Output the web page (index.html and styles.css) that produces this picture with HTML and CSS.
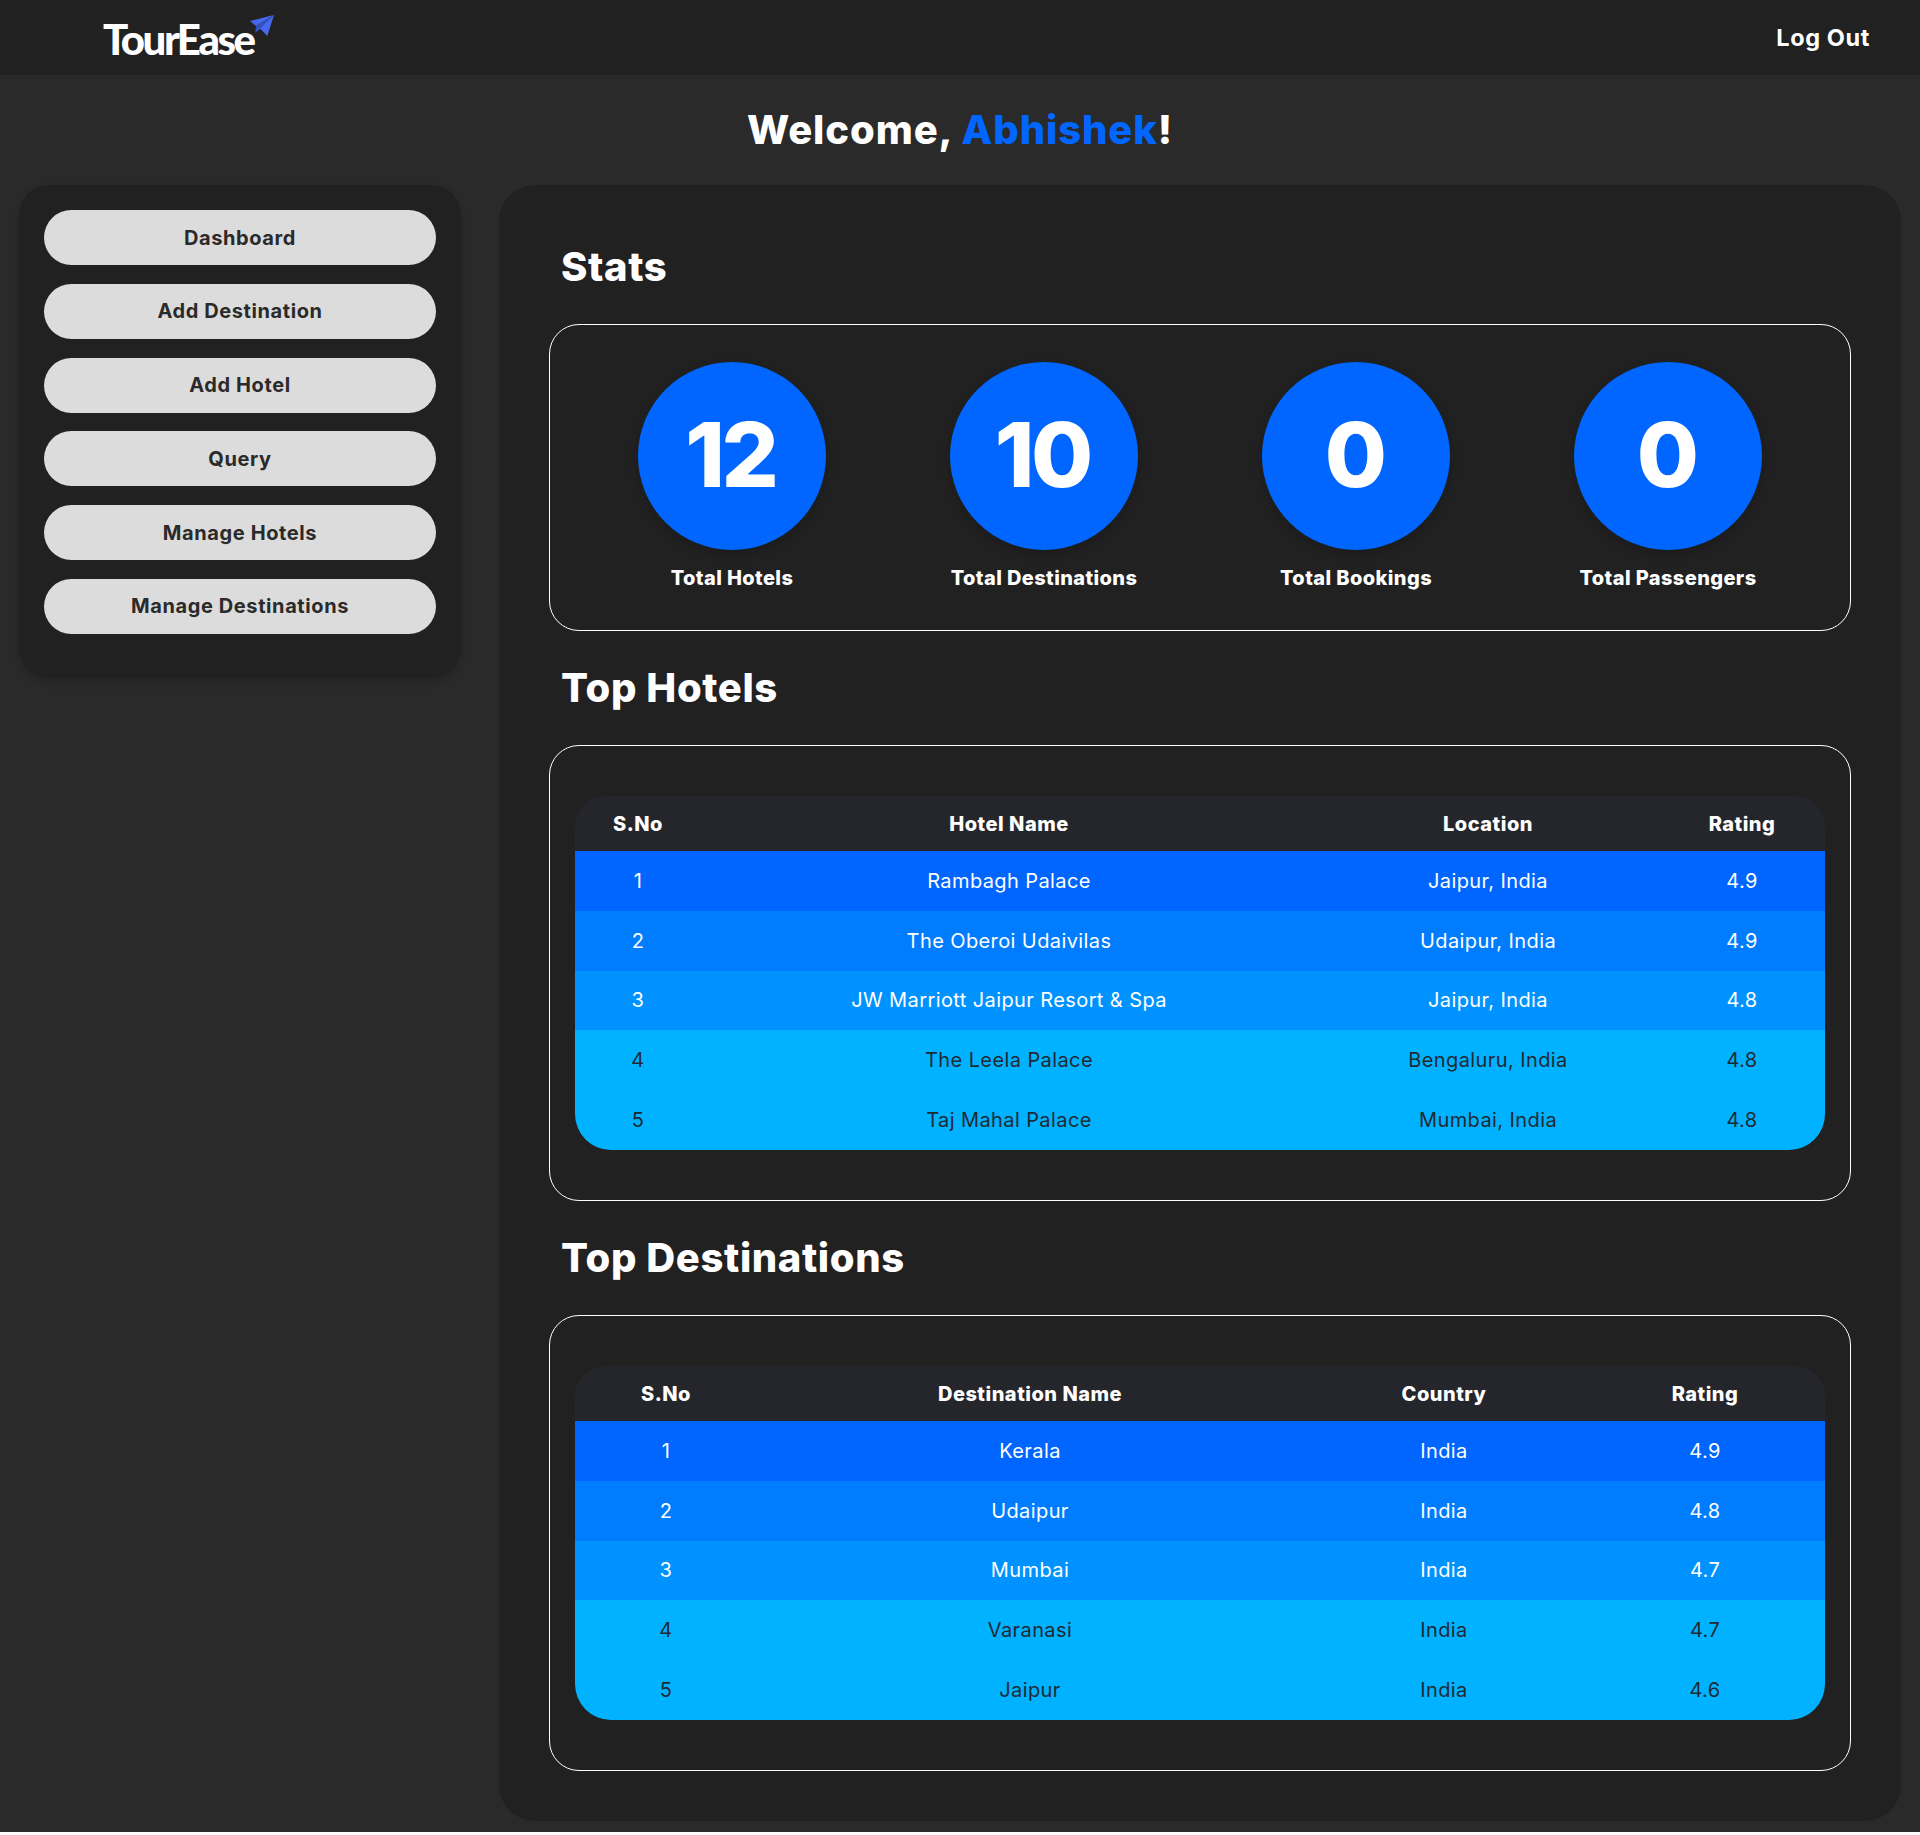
FILE: index.html
```html
<html>

<head>
	<title>TourEase Dashboard</title>
	<link rel="stylesheet" href="styles.css">
</head>

<body>
	<div class="page">
		<header class="topbar">
			<div class="logo">
				<span class="logoText">TourEase</span>
				<svg class="logoPlane" viewBox="0 0 24 22" width="24" height="22">
					<path d="M24 0 L0 6 L6 11 Z" fill="#4668ee" />
					<path d="M24 0 L6 11 L5.3 17.5 L10.7 14 Z" fill="#3450c0" />
					<path d="M24 0 L10 13.5 L17.3 21 Z" fill="#4668ee" />
				</svg>
			</div>
			<a class="logout">Log Out</a>
		</header>

		<h1 class="welcome">Welcome, <span class="welcomeName">Abhishek</span>!</h1>

		<div class="layout">
			<nav class="sidebar">
				<button class="navButton">Dashboard</button>
				<button class="navButton">Add Destination</button>
				<button class="navButton">Add Hotel</button>
				<button class="navButton">Query</button>
				<button class="navButton">Manage Hotels</button>
				<button class="navButton">Manage Destinations</button>
			</nav>

			<main class="content">
				<h2 class="sectionTitle">Stats</h2>
				<section class="box stats">
					<div class="stat">
						<div class="statCircle">12</div>
						<div class="statLabel">Total Hotels</div>
					</div>
					<div class="stat">
						<div class="statCircle">10</div>
						<div class="statLabel">Total Destinations</div>
					</div>
					<div class="stat">
						<div class="statCircle">0</div>
						<div class="statLabel">Total Bookings</div>
					</div>
					<div class="stat">
						<div class="statCircle">0</div>
						<div class="statLabel">Total Passengers</div>
					</div>
				</section>

				<h2 class="sectionTitle">Top Hotels</h2>
				<section class="box tableBox">
					<table class="dataTable hotels">
						<colgroup>
							<col class="col1">
							<col class="col2">
							<col class="col3">
							<col class="col4">
						</colgroup>
						<thead>
							<tr>
								<th>S.No</th>
								<th>Hotel Name</th>
								<th>Location</th>
								<th>Rating</th>
							</tr>
						</thead>
						<tbody>
							<tr>
								<td>1</td>
								<td>Rambagh Palace</td>
								<td>Jaipur, India</td>
								<td>4.9</td>
							</tr>
							<tr>
								<td>2</td>
								<td>The Oberoi Udaivilas</td>
								<td>Udaipur, India</td>
								<td>4.9</td>
							</tr>
							<tr>
								<td>3</td>
								<td>JW Marriott Jaipur Resort &amp; Spa</td>
								<td>Jaipur, India</td>
								<td>4.8</td>
							</tr>
							<tr>
								<td>4</td>
								<td>The Leela Palace</td>
								<td>Bengaluru, India</td>
								<td>4.8</td>
							</tr>
							<tr>
								<td>5</td>
								<td>Taj Mahal Palace</td>
								<td>Mumbai, India</td>
								<td>4.8</td>
							</tr>
						</tbody>
					</table>
				</section>

				<h2 class="sectionTitle">Top Destinations</h2>
				<section class="box tableBox">
					<table class="dataTable destinations">
						<colgroup>
							<col class="col1">
							<col class="col2">
							<col class="col3">
							<col class="col4">
						</colgroup>
						<thead>
							<tr>
								<th>S.No</th>
								<th>Destination Name</th>
								<th>Country</th>
								<th>Rating</th>
							</tr>
						</thead>
						<tbody>
							<tr>
								<td>1</td>
								<td>Kerala</td>
								<td>India</td>
								<td>4.9</td>
							</tr>
							<tr>
								<td>2</td>
								<td>Udaipur</td>
								<td>India</td>
								<td>4.8</td>
							</tr>
							<tr>
								<td>3</td>
								<td>Mumbai</td>
								<td>India</td>
								<td>4.7</td>
							</tr>
							<tr>
								<td>4</td>
								<td>Varanasi</td>
								<td>India</td>
								<td>4.7</td>
							</tr>
							<tr>
								<td>5</td>
								<td>Jaipur</td>
								<td>India</td>
								<td>4.6</td>
							</tr>
						</tbody>
					</table>
				</section>
			</main>
		</div>
	</div>
</body>

</html>
```

FILE: styles.css
```css
* {
	box-sizing: border-box;
	margin: 0;
	padding: 0;
}

html {
	background: white;
}

body {
	font-family: Inter, "Open Sans", sans-serif;
	color: white;
}

.page {
	background: #2a2a2a;
	height: 1832px;
}

.topbar {
	height: 75px;
	background: #212121;
	display: flex;
	align-items: center;
	justify-content: space-between;
	padding: 0 50px 0 103px;
}

.logo {
	position: relative;
	height: 54px;
}

.logoText {
	font-family: Lato, sans-serif;
	font-size: 42px;
	font-weight: 900;
	letter-spacing: -2.5px;
	line-height: 48px;
	display: block;
	margin-top: 4px;
}

.logoPlane {
	position: absolute;
	left: 147px;
	top: 4px;
}

.logout {
	font-size: 23.5px;
	font-weight: 700;
	letter-spacing: 0.6px;
}

.welcome {
	height: 110px;
	font-size: 40px;
	font-weight: 800;
	line-height: 110px;
	text-align: center;
	letter-spacing: 0.9px;
}

.welcomeName {
	color: #0066ff;
}

.layout {
	display: flex;
	align-items: flex-start;
	gap: 38px;
	padding: 0 19px;
}

.sidebar {
	width: 442px;
	flex-shrink: 0;
	background: #212121;
	border-radius: 30px;
	padding: 25px 25px 44px;
	display: flex;
	flex-direction: column;
	gap: 18.8px;
	box-shadow: 0 4px 10px rgba(0, 0, 0, 0.15);
}

.navButton {
	height: 55px;
	background: #dcdcdc;
	border: none;
	border-radius: 28px;
	font-family: inherit;
	font-size: 20px;
	font-weight: 700;
	letter-spacing: 0.6px;
	color: #2a2a2a;
}

.content {
	flex: 1;
	background: #212121;
	border-radius: 36px;
	padding: 52px 50px 50px;
}

.sectionTitle {
	font-size: 40px;
	font-weight: 800;
	letter-spacing: 0.6px;
	line-height: 60px;
	height: 60px;
	margin: 27px 0 27px 12px;
}

.sectionTitle:first-child {
	margin-top: 0;
}

.box {
	border: 1px solid white;
	border-radius: 30px;
}

.stats {
	height: 307px;
	padding: 37px 26px 0;
	display: grid;
	grid-template-columns: repeat(4, 1fr);
}

.stat {
	display: flex;
	flex-direction: column;
	align-items: center;
}

.statCircle {
	width: 188px;
	height: 188px;
	border-radius: 50%;
	background: #0066ff;
	box-shadow: 0 4px 12px rgba(0, 0, 0, 0.2);
	display: flex;
	align-items: center;
	justify-content: center;
	padding-bottom: 3px;
	font-size: 90px;
	font-weight: 800;
	letter-spacing: -3.5px;
	text-indent: -3.5px;
}

.statLabel {
	margin-top: 14px;
	font-size: 20px;
	line-height: 28px;
	font-weight: 800;
	letter-spacing: 0.4px;
}

.tableBox {
	height: 456px;
	padding: 50px 25px;
}

.dataTable {
	width: 100%;
	table-layout: fixed;
	border-collapse: separate;
	border-spacing: 0;
	text-align: center;
	font-size: 20px;
	letter-spacing: 0.4px;
}

.dataTable th {
	height: 55px;
	background: #25262b;
	font-weight: 800;
	letter-spacing: 0.5px;
}

.dataTable th:first-child {
	border-top-left-radius: 30px;
}

.dataTable th:last-child {
	border-top-right-radius: 30px;
}

.dataTable td {
	height: 59.8px;
}

.dataTable tbody tr:nth-child(1) td {
	background: #0066ff;
}

.dataTable tbody tr:nth-child(2) td {
	background: #007dff;
}

.dataTable tbody tr:nth-child(3) td {
	background: #0093ff;
}

.dataTable tbody tr:nth-child(4) td,
.dataTable tbody tr:nth-child(5) td {
	background: #00b2ff;
	color: #1f2a33;
}

.dataTable tbody tr:last-child td:first-child {
	border-bottom-left-radius: 36px;
}

.dataTable tbody tr:last-child td:last-child {
	border-bottom-right-radius: 36px;
}

.hotels .col1 {
	width: 126px;
}

.hotels .col2 {
	width: 616px;
}

.hotels .col3 {
	width: 342px;
}

.hotels .col4 {
	width: 166px;
}

.destinations .col1 {
	width: 182px;
}

.destinations .col2 {
	width: 546px;
}

.destinations .col3 {
	width: 282px;
}

.destinations .col4 {
	width: 240px;
}
```
